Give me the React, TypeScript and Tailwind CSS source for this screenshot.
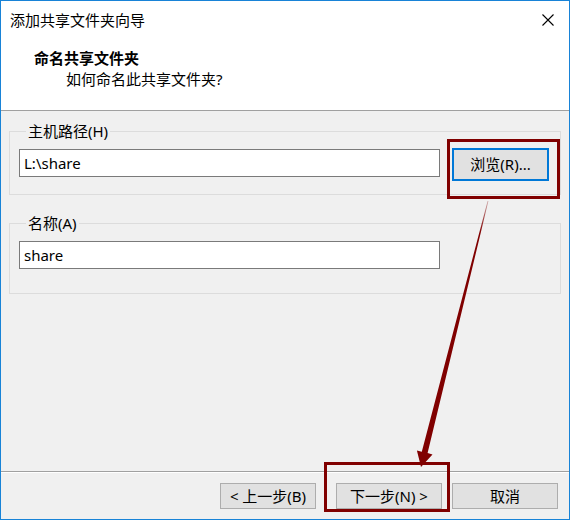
import React from 'react';

const font = { fontFamily: '"Noto Sans", "Noto Sans CJK SC", sans-serif' };

function WinButton({ label, className = '' }: { label: string; className?: string }) {
  return (
    <button
      className={`h-[26px] bg-[#e1e1e1] border border-[#adadad] text-[15px] leading-none text-black flex items-center justify-center ${className}`}
    >
      {label}
    </button>
  );
}

function GroupBox({ legend, children, className = '' }: { legend: string; children: React.ReactNode; className?: string }) {
  return (
    <fieldset className={`border border-[#dcdcdc] px-[9px] pr-[11px] ${className}`}>
      <legend className="ml-[7px] px-[2px] text-[15px] leading-[20px] text-black">{legend}</legend>
      {children}
    </fieldset>
  );
}

export default function App() {
  return (
    <div className="relative w-[570px] h-[520px] select-none" style={font}>
      <div className="w-full h-full border border-[#1883d7] flex flex-col bg-[#f0f0f0]">
        {/* title + header */}
        <div className="h-[110px] bg-white border-b border-[#a0a0a0] flex flex-col">
          <div className="h-[38px] flex items-center justify-between pl-[9px] pr-[14px]">
            <span className="text-[15px] text-black">添加共享文件夹向导</span>
            <svg width="12" height="12" viewBox="0 0 12 12" className="mr-[1px]">
              <path d="M0.5 0.5 L11.5 11.5 M11.5 0.5 L0.5 11.5" stroke="#000" strokeWidth="1.1" />
            </svg>
          </div>
          <div className="pl-[33px] pt-[9px] text-[15px] leading-[20px] font-bold text-black">命名共享文件夹</div>
          <div className="pl-[65px] pt-[1px] text-[15px] leading-[20px] text-black">如何命名此共享文件夹?</div>
        </div>

        {/* body */}
        <div className="flex-1 px-[8px] pt-[10px]">
          <GroupBox legend="主机路径(H)" className="pb-[13px]">
            <div className="flex items-start gap-[12px] pt-[7px]">
              <div className="flex-1 mt-[1px] h-[28px] bg-white border border-[#7a7a7a] flex items-center pl-[4px] text-[15px] text-black">
                L:\share
              </div>
              <button className="w-[97px] h-[33px] bg-[#e1e1e1] border-2 border-[#0078d7] text-[15px] text-black flex items-center justify-center">
                浏览(R)...
              </button>
            </div>
          </GroupBox>
          <GroupBox legend="名称(A)" className="mt-[18px] pb-[24px]">
            <div className="pt-[8px] pr-[109px]">
              <div className="h-[28px] bg-white border border-[#7a7a7a] flex items-center pl-[4px] text-[15px] text-black">
                share
              </div>
            </div>
          </GroupBox>
        </div>

        {/* footer */}
        <div className="border-t border-[#a0a0a0]">
          <div className="h-[47px] border-t border-white flex justify-end pt-[10px] pr-[11px]">
            <WinButton label="< 上一步(B)" className="w-[96px]" />
            <WinButton label="下一步(N) >" className="w-[106px] ml-[20px]" />
            <WinButton label="取消" className="w-[106px] ml-[10px]" />
          </div>
        </div>
      </div>

      {/* annotations */}
      <div className="absolute left-[447px] top-[139px] w-[113px] h-[60px] border-[3px] border-[#800000] pointer-events-none" />
      <div className="absolute left-[324px] top-[462px] w-[126px] h-[50px] border-[3px] border-[#800000] pointer-events-none" />
      <svg className="absolute left-0 top-0 pointer-events-none" width="570" height="520" viewBox="0 0 570 520">
        <defs>
          <linearGradient id="fade" x1="488" y1="201" x2="421" y2="467" gradientUnits="userSpaceOnUse">
            <stop offset="0" stopColor="#800000" stopOpacity="0.3" />
            <stop offset="0.12" stopColor="#800000" stopOpacity="1" />
            <stop offset="1" stopColor="#800000" stopOpacity="1" />
          </linearGradient>
        </defs>
        <polygon
          points="488.4,201.1 427.6,453.1 432.5,454.4 421,467 416.9,450.4 421.8,451.7 487.6,200.9"
          fill="url(#fade)"
        />
      </svg>
    </div>
  );
}
